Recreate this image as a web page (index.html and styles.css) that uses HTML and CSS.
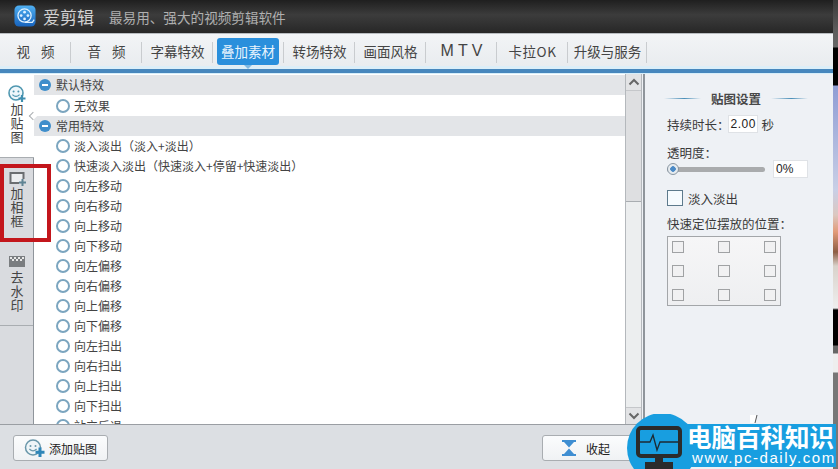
FILE: index.html
```html
<!DOCTYPE html>
<html lang="zh-CN">
<head>
<meta charset="utf-8">
<title>爱剪辑</title>
<link rel="stylesheet" href="styles.css">
</head>
<body>
<div class="window">
  <header class="titlebar">
    <svg class="logo" viewBox="0 0 24 24" width="22" height="22" aria-hidden="true">
      <defs>
        <linearGradient id="logoFill" x1="0" y1="0" x2="0" y2="1">
          <stop offset="0" stop-color="#4fb0f2"/>
          <stop offset="1" stop-color="#1763bd"/>
        </linearGradient>
      </defs>
      <rect x="0.5" y="0.5" width="23" height="23" rx="5" fill="url(#logoFill)"/>
      <circle cx="11.5" cy="11.5" r="7.2" fill="none" stroke="#dff1ff" stroke-width="1.4"/>
      <circle cx="11.5" cy="7.8" r="1.5" fill="#dff1ff"/>
      <circle cx="11.5" cy="15.2" r="1.5" fill="#dff1ff"/>
      <circle cx="7.8" cy="11.5" r="1.5" fill="#dff1ff"/>
      <circle cx="15.2" cy="11.5" r="1.5" fill="#dff1ff"/>
      <path d="M12 19 H20 L22 16" fill="none" stroke="#dff1ff" stroke-width="1.3"/>
    </svg>
    <span class="app-name">爱剪辑</span>
    <span class="slogan">最易用、强大的视频剪辑软件</span>
  </header>

  <nav class="nav">
    <div class="nav-cell"><span class="nav-spaced">视频</span></div>
    <div class="nav-cell"><span class="nav-spaced">音频</span></div>
    <div class="nav-cell">字幕特效</div>
    <div class="nav-cell"><span class="nav-active">叠加素材</span></div>
    <div class="nav-cell">转场特效</div>
    <div class="nav-cell">画面风格</div>
    <div class="nav-cell nav-wide">M T V</div>
    <div class="nav-cell nav-karaoke">卡拉OK</div>
    <div class="nav-cell nav-last">升级与服务</div>
  </nav>
  <div class="nav-rule"></div>

  <div class="content">
    <div class="main">
      <div class="workspace">
        <aside class="side">
          <div class="side-tab side-current">
            <svg class="side-icon" viewBox="0 0 20 20" width="20" height="20" aria-hidden="true">
              <circle cx="9" cy="9" r="7" fill="#eef7fb" stroke="#4f97b0" stroke-width="1.6"/>
              <circle cx="6.6" cy="7.4" r="1" fill="#4f97b0"/>
              <circle cx="11.4" cy="7.4" r="1" fill="#4f97b0"/>
              <path d="M5.4 10.6 Q9 14 12.6 10.6" fill="none" stroke="#4f97b0" stroke-width="1.2"/>
              <path d="M15 11 V18 M11.5 14.5 H18.5" stroke="#3f8fb0" stroke-width="2.2"/>
            </svg>
            <span>加</span><span>贴</span><span>图</span>
          </div>
          <div class="side-tab">
            <svg class="side-icon" viewBox="0 0 20 20" width="20" height="20" aria-hidden="true">
              <path d="M12 15 H3.5 V5 H16.5 V11" fill="#eceef0" stroke="#6a6d70" stroke-width="2"/>
              <path d="M15.5 11 V18 M12 14.5 H19" stroke="#5f8494" stroke-width="2"/>
            </svg>
            <span>加</span><span>相</span><span>框</span>
          </div>
          <div class="side-tab">
            <svg class="side-icon" viewBox="0 0 20 20" width="20" height="20" aria-hidden="true">
              <rect x="2" y="4" width="16" height="11" fill="#7a7d80"/>
              <path d="M3 5 h2 v2 h-2z M7 5 h2 v2 h-2z M11 5 h2 v2 h-2z M15 5 h2 v2 h-2z M5 7 h2 v2 h-2z M9 7 h2 v2 h-2z M13 7 h2 v2 h-2z" fill="#e8e8e8"/>
            </svg>
            <span>去</span><span>水</span><span>印</span>
          </div>
        </aside>

        <section class="list">
          <div class="group"><i class="minus"></i>默认特效</div>
          <div class="row row-tall"><i class="radio"></i>无效果</div>
          <div class="group"><i class="minus"></i>常用特效</div>
          <div class="row"><i class="radio"></i>淡入淡出（淡入+淡出）</div>
          <div class="row"><i class="radio"></i>快速淡入淡出（快速淡入+停留+快速淡出）</div>
          <div class="row"><i class="radio"></i>向左移动</div>
          <div class="row"><i class="radio"></i>向右移动</div>
          <div class="row"><i class="radio"></i>向上移动</div>
          <div class="row"><i class="radio"></i>向下移动</div>
          <div class="row"><i class="radio"></i>向左偏移</div>
          <div class="row"><i class="radio"></i>向右偏移</div>
          <div class="row"><i class="radio"></i>向上偏移</div>
          <div class="row"><i class="radio"></i>向下偏移</div>
          <div class="row"><i class="radio"></i>向左扫出</div>
          <div class="row"><i class="radio"></i>向右扫出</div>
          <div class="row"><i class="radio"></i>向上扫出</div>
          <div class="row"><i class="radio"></i>向下扫出</div>
          <div class="row"><i class="radio"></i>站立后退</div>
        </section>

        <div class="scrollbar">
          <div class="scroll-btn">
            <svg viewBox="0 0 12 8" width="12" height="8" aria-hidden="true"><path d="M1.5 6.5 L6 2 L10.5 6.5" fill="none" stroke="#666" stroke-width="2"/></svg>
          </div>
          <div class="scroll-thumb"></div>
          <div class="scroll-track"></div>
          <div class="scroll-btn">
            <svg viewBox="0 0 12 8" width="12" height="8" aria-hidden="true"><path d="M1.5 1.5 L6 6 L10.5 1.5" fill="none" stroke="#666" stroke-width="2"/></svg>
          </div>
        </div>
      </div>

      <footer class="actions">
        <button class="btn btn-add" type="button">
          <svg viewBox="0 0 22 20" width="22" height="20" aria-hidden="true">
            <circle cx="9" cy="9.5" r="7.5" fill="#eef5f8" stroke="#6a97aa" stroke-width="1.5"/>
            <circle cx="6.5" cy="8" r="1" fill="#6a97aa"/>
            <circle cx="11.5" cy="8" r="1" fill="#6a97aa"/>
            <path d="M5.4 11 Q9 14.6 12.6 11" fill="none" stroke="#6a97aa" stroke-width="1.2"/>
            <path d="M16 9.5 V19 M11.5 14.3 H20.5" stroke="#2f86b8" stroke-width="3"/>
          </svg>
          添加贴图
        </button>
        <button class="btn btn-fold" type="button">
          <svg viewBox="0 0 16 18" width="16" height="18" aria-hidden="true">
            <path d="M1 1 H15 V3 H13 L8 8.6 L3 3 H1 Z M1 17 H15 V15 H13 L8 9.6 L3 15 H1 Z" fill="#3f8ed2"/>
          </svg>
          <span>收起</span>
        </button>
      </footer>
    </div>

    <aside class="panel">
      <h2 class="panel-title"><i class="title-line"></i><span>贴图设置</span><i class="title-line"></i></h2>
      <div class="duration">
        <span>持续时长：</span><span class="box box-time">2.00</span><span>秒</span>
      </div>
      <div class="field-label opacity-label">透明度：</div>
      <div class="slider-row">
        <div class="slider"><i class="knob"></i></div>
        <span class="box box-pct">0%</span>
      </div>
      <label class="fade"><i class="check"></i>淡入淡出</label>
      <div class="field-label">快速定位摆放的位置：</div>
      <div class="anchors">
        <i></i><i></i><i></i>
        <i></i><i></i><i></i>
        <i></i><i></i><i></i>
      </div>
    </aside>
  </div>
</div>

<div class="callout"></div>

<div class="badge">
  <svg class="badge-art" viewBox="0 0 212 55" width="212" height="55" aria-hidden="true">
    <path d="M124 1 h6 v8 h-6z" fill="#fff"/>
    <path d="M131 1 L129 9" stroke="#555" stroke-width="1"/>
    <rect x="54" y="10" width="156" height="43" fill="#189ee0"/>
    <circle cx="36" cy="34" r="35" fill="#189ee0"/>
    <rect x="12" y="14" width="42" height="28" rx="3" fill="#189ee0" stroke="#2b2b2b" stroke-width="4"/>
    <path d="M14 28 H24 L27 21 L31 36 L34 28 H52" fill="none" stroke="#1c2a33" stroke-width="1.3"/>
    <rect x="29" y="44" width="8" height="5" fill="#2b2b2b"/>
    <rect x="19" y="48" width="28" height="7" fill="#2b2b2b"/>
  </svg>
  <div class="badge-text">
    <strong>电脑百科知识</strong>
    <span>www.pc-daily.com</span>
  </div>
</div>
</body>
</html>
```
FILE: styles.css
```css
* {
  box-sizing: border-box;
}

html,
body {
  height: 100%;
}

body {
  position: relative;
  margin: 0;
  overflow: hidden;
  font-family: "Noto Sans CJK SC", "Liberation Sans", sans-serif;
  font-size: 12px;
  color: #3a3a3a;
  background: linear-gradient(
    180deg,
    #3a3a3a 0,
    #5f5f5f 33px,
    #666 47px,
    #000 48px,
    #000 85px,
    #8f9dd4 86px,
    #c9cfe6 190px,
    #dcc7c0 215px,
    #e29a78 232px,
    #8d5d44 252px,
    #d9d2cb 266px,
    #eeeeee 308px,
    #000 310px,
    #000 345px,
    #666 346px,
    #666 353px,
    #eee 354px,
    #eee 372px,
    #777 373px,
    #777 100%
  );
}

i {
  display: block;
  font-style: normal;
}

.window {
  display: flex;
  flex-direction: column;
  width: 833px;
  height: 469px;
  background: #eef1f5;
}

/* title bar */
.titlebar {
  display: flex;
  align-items: center;
  flex: none;
  height: 33px;
  padding: 0 0 0 14px;
  background: linear-gradient(180deg, #1f1f1f, #3c3c3c 45%, #272727);
}

.logo {
  flex: none;
  margin-top: -1px;
}

.app-name {
  margin-left: 7px;
  font-size: 17px;
  color: #d2d2d2;
}

.slogan {
  margin-left: 15px;
  font-size: 13.6px;
  color: #b0b0b0;
}

/* main navigation */
.nav {
  display: flex;
  flex: none;
  height: 33px;
  padding-top: 4px;
  border-top: 1px solid #b8bcc0;
  background: linear-gradient(180deg, #f2f4f6, #e9ecef);
  font-size: 13.5px;
  color: #444;
}

.nav-cell {
  position: relative;
  display: flex;
  align-items: center;
  justify-content: center;
  width: 71px;
  height: 27px;
  padding-bottom: 1px;
  white-space: nowrap;
}

.nav-cell::after {
  content: "";
  position: absolute;
  top: 4px;
  right: 0;
  width: 1px;
  height: 21px;
  background: #c9cccf;
}

.nav-spaced {
  padding-left: 11px;
  letter-spacing: 11px;
}

.nav-wide {
  font-family: "Liberation Sans", sans-serif;
  font-size: 16px;
}

.nav-karaoke {
  letter-spacing: 0.6px;
}

.nav-last {
  width: 79px;
}

.nav-active {
  position: relative;
  display: flex;
  align-items: center;
  justify-content: center;
  align-self: flex-start;
  width: 62px;
  height: 27px;
  margin-left: -1px;
  padding-bottom: 1px;
  border-radius: 3px;
  background: #2a8fdc;
  color: #e9f4fd;
}

.nav-active::after {
  content: "";
  position: absolute;
  left: 27px;
  bottom: -4px;
  width: 0;
  height: 0;
  border-top: 4px solid #7fb8e2;
  border-left: 4px solid transparent;
  border-right: 4px solid transparent;
}

.nav-rule {
  flex: none;
  height: 8px;
  border-top: 3px solid #dceef8;
  border-bottom: 1px solid #d6eefa;
  background: #4787bd;
  background-clip: content-box;
}

/* body of the window */
.content {
  display: flex;
  flex: 1;
  min-height: 0;
}

.main {
  display: flex;
  flex-direction: column;
  flex: none;
  width: 645px;
  border-right: 2px solid #8f959b;
}

.workspace {
  display: flex;
  flex: 1;
  min-height: 0;
}

/* vertical tabs */
.side {
  flex: none;
  width: 34px;
  border-right: 1px solid #8f959b;
  background: #d9dbdf;
}

.side-tab {
  position: relative;
  display: flex;
  flex-direction: column;
  align-items: center;
  height: 84px;
  padding: 10px 0 0 1px;
  border-bottom: 1px solid #a9adb1;
  font-size: 13px;
  line-height: 14px;
  color: #444;
}

.side-current {
  margin-right: -1px;
  padding-right: 1px;
  background: #fff;
}

.side-current::after {
  content: "";
  position: absolute;
  top: 39px;
  right: -2px;
  width: 5px;
  height: 5px;
  border-left: 1px solid #a9adb1;
  border-bottom: 1px solid #a9adb1;
  background: #fff;
  transform: rotate(45deg);
}

.side-icon {
  flex: none;
  margin-bottom: -2px;
}

/* effect list */
.list {
  flex: 1;
  min-width: 0;
  overflow: hidden;
  padding-top: 1px;
  background: #fff;
  font-size: 12px;
  color: #444;
}

.group,
.row {
  display: flex;
  align-items: center;
  height: 20px;
  padding-bottom: 1px;
  white-space: nowrap;
}

.group {
  padding-left: 5px;
  background: #e3e5e8;
}

.row {
  padding-left: 22px;
}

.row-tall {
  height: 21px;
}

.minus {
  position: relative;
  flex: none;
  width: 12px;
  height: 12px;
  margin: 1px 5px 0 0;
  border-radius: 50%;
  background: #3f8ecb;
}

.minus::after {
  content: "";
  position: absolute;
  top: 5px;
  left: 3px;
  width: 6px;
  height: 2px;
  background: #fff;
}

.radio {
  flex: none;
  width: 14px;
  height: 14px;
  margin: 1px 4px 0 0;
  border: 2px solid #7ba5bf;
  border-radius: 50%;
  background: #fff;
}

/* scrollbar */
.scrollbar {
  display: flex;
  flex-direction: column;
  flex: none;
  width: 17px;
  margin-right: 1px;
  border-left: 1px solid #b4b8bc;
  border-right: 1px solid #b4b8bc;
  background: #eceeef;
}

.scroll-btn {
  display: flex;
  align-items: center;
  justify-content: center;
  flex: none;
  height: 17px;
  background: #e2e3e5;
  border-bottom: 1px solid #c5c7ca;
}

.scroll-btn:last-child {
  border-top: 1px solid #c5c7ca;
  border-bottom: 0;
}

.scroll-thumb {
  flex: none;
  height: 111px;
  background: #dedfe1;
  border-bottom: 1px solid #a9adb1;
}

.scroll-track {
  flex: 1;
}

/* bottom actions */
.actions {
  display: flex;
  align-items: flex-start;
  justify-content: space-between;
  flex: none;
  height: 45px;
  padding: 10px 1px 0 13px;
  border-top: 1px solid #9a9ea3;
  background: #dcdfe3;
}

.btn {
  display: flex;
  align-items: center;
  height: 26px;
  padding: 0;
  border: 1px solid #a9adb1;
  border-radius: 3px;
  background: linear-gradient(180deg, #fbfcfd, #f0f2f4);
  font: inherit;
  font-size: 12px;
  color: #222;
}

.btn-add {
  width: 95px;
  padding-left: 10px;
  gap: 3px;
}

.btn-fold {
  width: 100px;
  padding-left: 18px;
  gap: 9px;
}

/* settings panel */
.panel {
  flex: 1;
  padding: 16px 0 0 22px;
  background: #eef1f5;
  font-size: 12.5px;
  color: #3a3a3a;
}

.panel-title {
  display: flex;
  align-items: center;
  gap: 10px;
  width: 144px;
  height: 16px;
  margin: 0 0 9px -3px;
  font-size: 12.5px;
  font-weight: 700;
  white-space: nowrap;
  color: #484848;
}

.title-line {
  flex: none;
  width: 37px;
  height: 1px;
  background: linear-gradient(90deg, #eef1f5, #4b8fb8 55%, #eef1f5);
}

.duration {
  display: flex;
  align-items: center;
  height: 18px;
}

.box {
  display: block;
  height: 18px;
  background: #fff;
  border: 1px solid #dfe2e6;
  font-family: "Liberation Sans", sans-serif;
  font-size: 12px;
  line-height: 16px;
  color: #222;
}

.box-time {
  width: 30px;
  margin: 0 4px 0 -2px;
  padding-left: 2px;
  letter-spacing: 0.5px;
}

.box-pct {
  width: 35px;
  padding-left: 2px;
}

.field-label {
  height: 18px;
  line-height: 18px;
  white-space: nowrap;
}

.opacity-label {
  margin-top: 11px;
}

.slider-row {
  display: flex;
  align-items: center;
  height: 18px;
  margin-top: -2px;
  gap: 8px;
}

.slider {
  position: relative;
  width: 98px;
  height: 5px;
  border-radius: 3px;
  background: #a9abad;
}

.knob {
  position: absolute;
  top: -4px;
  left: 0;
  width: 12px;
  height: 12px;
  border: 1px solid #8a97a3;
  border-radius: 50%;
  background: radial-gradient(circle, #4c8ac6 0 2.5px, #e6ebef 3px);
}

.fade {
  display: flex;
  align-items: center;
  height: 18px;
  margin-top: 11px;
  margin-bottom: 8px;
  gap: 5px;
}

.check {
  width: 16px;
  height: 16px;
  border: 1px solid #5d7a8c;
  background: #f6fbfe;
}

.anchors {
  display: grid;
  grid-template-columns: repeat(3, 12px);
  grid-template-rows: repeat(3, 12px);
  justify-content: space-between;
  align-content: space-between;
  width: 114px;
  height: 70px;
  margin-top: 3px;
  padding: 4px;
  border: 1px solid #a3a6a9;
  background: linear-gradient(180deg, #f6f6f7, #eeeff1);
}

.anchors i {
  border: 1px solid #a0a2a4;
  background: #f1f1f2;
}

/* annotation around the frame tab */
.callout {
  position: absolute;
  top: 164px;
  left: 0;
  width: 51px;
  height: 78px;
  border: 4px solid #c3161c;
  pointer-events: none;
}

/* site badge in the corner */
.badge {
  position: absolute;
  top: 414px;
  left: 626px;
  width: 212px;
  height: 55px;
  overflow: hidden;
}

.badge-art {
  display: block;
}

.badge-text {
  position: absolute;
  top: 10px;
  left: 61px;
  display: flex;
  flex-direction: column;
  color: #fff;
  white-space: nowrap;
}

.badge-text strong {
  font-size: 24.5px;
  line-height: 26px;
  font-weight: 700;
}

.badge-text span {
  margin: 0 0 0 5px;
  font-family: "Liberation Sans", sans-serif;
  font-size: 15px;
  line-height: 16px;
  letter-spacing: 1.55px;
}
```
